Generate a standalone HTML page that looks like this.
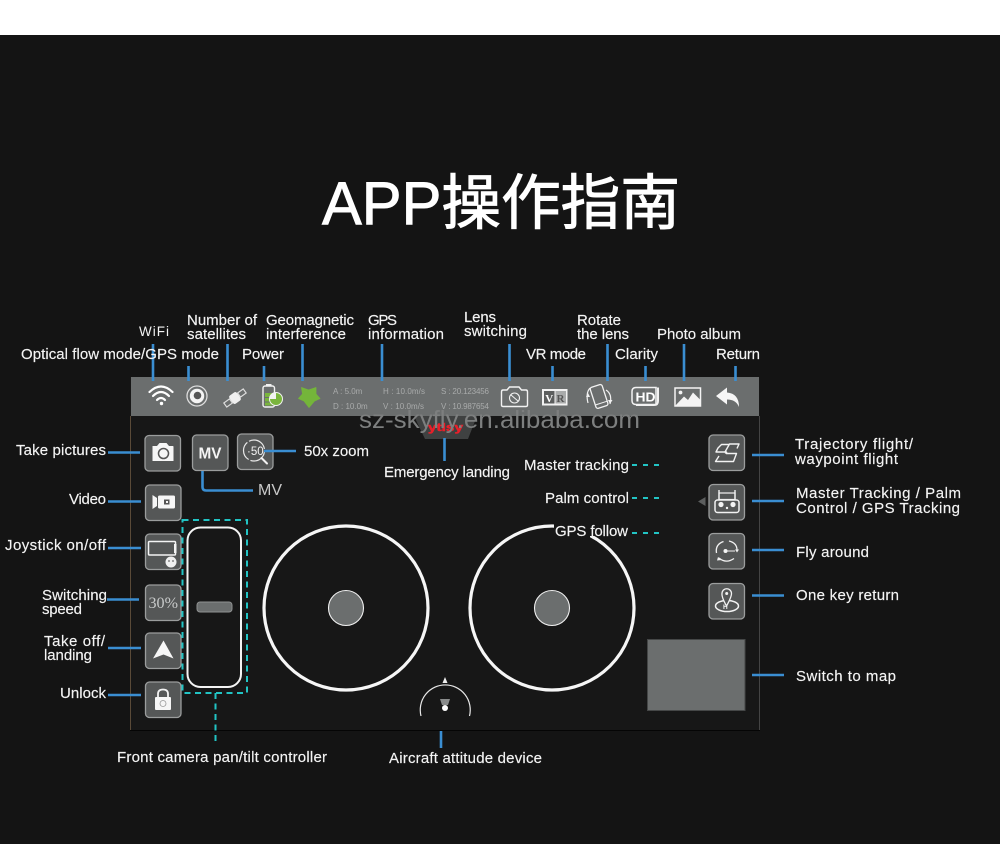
<!DOCTYPE html>
<html lang="zh">
<head>
<meta charset="utf-8">
<title>APP操作指南</title>
<style>
html,body{margin:0;padding:0;background:#141414;width:1000px;height:844px;overflow:hidden}
svg{display:block;filter:blur(.35px)}
text{font-family:"Liberation Sans","Noto Sans CJK SC",sans-serif}
.l text{fill:#f4f4f4;font-size:15px;stroke:#f4f4f4;stroke-width:.15}
.b{stroke:#3a8ed2;stroke-width:2.6;fill:none}
.d{stroke:#22c4c4;stroke-width:2;fill:none}
.btn{fill:#555757;stroke:#9b9d9d;stroke-width:1.3}
.s text{fill:#a9abab;font-size:8px}
</style>
</head>
<body>
<svg width="1000" height="844" viewBox="0 0 1000 844" xmlns="http://www.w3.org/2000/svg">
<rect width="1000" height="844" fill="#141414"/>
<rect width="1000" height="35" fill="#ffffff"/>

<text x="322" y="224" fill="#ffffff" stroke="#ffffff" stroke-width=".9" font-size="60" textLength="358" lengthAdjust="spacingAndGlyphs">APP操作指南</text>

<!-- panel -->
<rect x="130" y="377" width="629.500" height="353" fill="#171717"/>
<path d="M130.500 416V730" stroke="#5a4a38" stroke-width="1"/>
<path d="M759.500 416V730" stroke="#444" stroke-width="1"/>
<path d="M130 730.500H760" stroke="#050505" stroke-width="1"/>
<rect x="131" y="377" width="628" height="39" fill="#6b6e6e"/>

<!-- emergency trapezoid -->
<path d="M414 416H477L468 439H425Z" fill="#3f4141"/>

<!-- status bar icons -->
<g fill="none" stroke="#fff" stroke-width="2.200" stroke-linecap="round">
<path d="M149.500 392Q161 381 172.500 392"/>
<path d="M153 396Q161 388 169 396"/>
<path d="M157 400Q161 396 165 400"/>
</g>
<circle cx="161.500" cy="403.500" r="1.700" fill="#fff"/>
<circle cx="197" cy="396" r="10" fill="none" stroke="#ddd" stroke-width="1.300"/>
<circle cx="197" cy="396" r="7.200" fill="#f4f4f4"/>
<circle cx="197.500" cy="395.500" r="3.800" fill="#555"/>
<g transform="rotate(-36 235 398)">
<rect x="223" y="395.500" width="7" height="5" fill="none" stroke="#ddd" stroke-width="1.200"/>
<rect x="240" y="395.500" width="7" height="5" fill="none" stroke="#ddd" stroke-width="1.200"/>
<rect x="230.500" y="393" width="9" height="10" rx="2" fill="#f0f0f0"/>
</g>
<rect x="263" y="386" width="11.500" height="21" rx="2" fill="none" stroke="#f2f2f2" stroke-width="1.400"/>
<rect x="266" y="384" width="5.500" height="2" fill="#f2f2f2"/>
<rect x="265" y="393" width="8" height="4" fill="#7ab53d"/>
<rect x="265" y="398" width="8" height="3.500" fill="#7ab53d"/>
<rect x="265" y="402.500" width="8" height="3" fill="#7ab53d"/>
<circle cx="276" cy="399" r="6.500" fill="#7ab53d" stroke="#f2f2f2" stroke-width="1"/>
<path d="M276 399V392.500A6.500 6.500 0 0 0 269.500 399Z" fill="#f2f2f2"/>
<path d="M301.500 387.500L308.500 390L316 387.500L316 394L320 398.500L314.500 401L309 407.500L304 401L298.500 398.500L302.500 394Z" fill="#74b53a" stroke="#74b53a" stroke-width=".8" stroke-linejoin="round"/>

<g class="s">
<text x="333" y="394">A : 5.0m</text>
<text x="333" y="409">D : 10.0m</text>
<text x="383" y="394" textLength="42">H : 10.0m/s</text>
<text x="383" y="409" textLength="41">V : 10.0m/s</text>
<text x="441" y="394" textLength="48">S : 20.123456</text>
<text x="441" y="409" textLength="48">V : 10.987654</text>
</g>

<!-- lens -->
<path d="M503 390H507L509.500 387H519L521.500 390H526Q527.500 390 527.500 392V405Q527.500 406.500 526 406.500H503Q501.500 406.500 501.500 405V392Q501.500 390 503 390Z" fill="none" stroke="#f2f2f2" stroke-width="1.400"/>
<circle cx="514.500" cy="398" r="5" fill="none" stroke="#f2f2f2" stroke-width="1.100"/>
<path d="M511 395L518 401" stroke="#f2f2f2" stroke-width="1"/>
<!-- VR -->
<rect x="542" y="389" width="25.500" height="16.500" fill="#f2f2f2"/>
<rect x="544" y="391" width="10.500" height="12.500" fill="#5c5e5e"/>
<rect x="555.500" y="391" width="10.500" height="12.500" fill="#a9abab"/>
<text x="545.300" y="402" font-size="11" fill="#fff" style="font-family:'Liberation Serif',serif;font-weight:700">V</text>
<text x="556.500" y="402" font-size="11" fill="#555" style="font-family:'Liberation Serif',serif;font-weight:700">R</text>
<!-- rotate -->
<g transform="rotate(-18 599 397)">
<rect x="593" y="385.500" width="12.500" height="22" rx="2" fill="none" stroke="#f2f2f2" stroke-width="1.300"/>
<path d="M593 403.500H605.500" stroke="#f2f2f2" stroke-width="1"/>
</g>
<path d="M590 388Q585.500 393 588 403" fill="none" stroke="#f2f2f2" stroke-width="1.200"/>
<path d="M606 390Q612.500 394 610 404" fill="none" stroke="#f2f2f2" stroke-width="1.200"/>
<path d="M586 397L590 397L588 393Z M608 400L612.500 400L610 404Z" fill="#f2f2f2"/>
<!-- HD -->
<path d="M636 387.500H656V404.500H636Q632 404.500 632 400.500V391.500Q632 387.500 636 387.500Z" fill="none" stroke="#f2f2f2" stroke-width="1.500"/>
<path d="M656 387.500H659V401Q659 406 654 406H636V404.500H654Q657 404.500 657 401V388Z" fill="#f2f2f2"/>
<text x="635.500" y="401.500" font-size="13" fill="#fff" style="font-weight:700" textLength="20" lengthAdjust="spacingAndGlyphs">HD</text>
<!-- album -->
<rect x="675" y="388" width="25.500" height="18" fill="none" stroke="#f4f4f4" stroke-width="1.500"/>
<circle cx="680.500" cy="392.500" r="1.900" fill="#f4f4f4"/>
<path d="M675 406L684 396.500L688 400L693 392.500L701 400.500V406.500H675Z" fill="#f4f4f4"/>
<!-- return -->
<path d="M716 396L727 387.500V392.500Q739 393.500 739 407Q736 399.500 727 399.500V404.500Z" fill="#f6f6f6"/>

<!-- blue top lines -->
<g class="b">
<path d="M153 344V381M188.500 366V381M227.500 344V381M264 366V381M302.500 344V381M382 344V381M509.500 344V381M552.500 366V381M607.500 344V381M645.500 366V381M684 344V381M735.500 366V381"/>
</g>

<!-- red logo under watermark -->
<text x="428" y="431" font-size="11" fill="#e8202a" stroke="#e8202a" stroke-width=".5" style="font-weight:700" textLength="35" lengthAdjust="spacingAndGlyphs">ytlsy</text>
<!-- watermark -->
<text x="359" y="428" font-size="25" fill="#7d7f7f" textLength="281" lengthAdjust="spacingAndGlyphs">sz-skyfly.en.alibaba.com</text>

<!-- buttons -->
<g class="btn">
<rect x="145" y="435.500" width="35.500" height="35.500" rx="4"/>
<rect x="192.500" y="435" width="35.500" height="35.500" rx="4"/>
<rect x="237.500" y="434" width="35.500" height="35.500" rx="4"/>
<rect x="145.500" y="485" width="35.500" height="35.500" rx="4"/>
<rect x="145.500" y="534" width="35.500" height="35.500" rx="4"/>
<rect x="145.500" y="585" width="35.500" height="35.500" rx="4"/>
<rect x="145.500" y="633" width="35.500" height="35.500" rx="4"/>
<rect x="145.500" y="682" width="35.500" height="35.500" rx="4"/>
<rect x="709" y="435" width="35.500" height="35.500" rx="4"/>
<rect x="709" y="484.500" width="35.500" height="35.500" rx="4"/>
<rect x="709" y="533.500" width="35.500" height="35.500" rx="4"/>
<rect x="709" y="583.500" width="35.500" height="35.500" rx="4"/>
</g>

<!-- camera -->
<path d="M152.500 446H157L159.500 443H166.500L169 446H173Q173.500 446 173.500 447V461H152.500Z" fill="#f6f6f6"/>
<circle cx="163.500" cy="453.500" r="5" fill="#f6f6f6" stroke="#555" stroke-width="1.500"/>
<circle cx="163.500" cy="453.500" r="2.500" fill="#f6f6f6"/>
<!-- MV -->
<text x="198.500" y="458.500" font-size="15.500" fill="#f4f4f4" style="font-weight:700" textLength="23" lengthAdjust="spacingAndGlyphs">MV</text>
<!-- zoom -->
<circle cx="254" cy="450.500" r="10.500" fill="none" stroke="#e8e8e8" stroke-width="1.200" stroke-dasharray="20 2"/>
<path d="M261.500 458L267 463.500" stroke="#f2f2f2" stroke-width="2" stroke-linecap="round"/>
<text x="247" y="455" font-size="11.500" fill="#f2f2f2">·50</text>
<!-- video -->
<path d="M152.500 495L157 498V506L152.500 509Z" fill="#f6f6f6"/>
<rect x="158" y="495.500" width="17" height="13" rx="1.500" fill="#f6f6f6"/>
<rect x="164" y="499.500" width="5.500" height="5" fill="#555"/>
<rect x="166" y="501" width="2" height="2" fill="#f6f6f6"/>
<!-- joystick -->
<rect x="148.500" y="541.500" width="27" height="13.500" rx="1" fill="none" stroke="#f4f4f4" stroke-width="1.500"/>
<rect x="174" y="544" width="2.500" height="9" fill="#f4f4f4"/>
<circle cx="171" cy="562" r="5.500" fill="#f0f0f0"/>
<circle cx="169" cy="561" r="1" fill="#888"/>
<circle cx="173" cy="561" r="1" fill="#888"/>
<!-- 30% -->
<text x="148.500" y="608" font-size="15.500" fill="#c8caca" style="font-family:'Liberation Serif',serif" textLength="29.500" lengthAdjust="spacingAndGlyphs">30%</text>
<!-- takeoff -->
<path d="M163.500 640.500L173.500 658.500L163.500 654.500L153 658.500Z" fill="#f6f6f6"/>
<!-- lock -->
<path d="M158 697V694Q158 689.500 163 689.500Q168 689.500 168 694V697" fill="none" stroke="#f2f2f2" stroke-width="1.800"/>
<rect x="155" y="697" width="16" height="13" rx="1" fill="#f6f6f6"/>
<circle cx="163" cy="703.500" r="3" fill="none" stroke="#999" stroke-width=".8"/>

<!-- right icons -->
<g fill="none" stroke="#f2f2f2" stroke-width="1.400" stroke-linejoin="round">
<path d="M725 452L729.500 444H739L737 448.500"/>
<path d="M726 452H716L718 448L721.500 444.500H729.500"/>
<path d="M726 453.500H736.500L733.500 461.500H715.500L719 456"/>
</g>
<circle cx="726" cy="452.500" r="1.300" fill="#f2f2f2"/>
<!-- remote -->
<path d="M719 490V500M735 490V500" stroke="#f2f2f2" stroke-width="1.400"/>
<rect x="719" y="493" width="16" height="6.500" fill="none" stroke="#f2f2f2" stroke-width="1.200"/>
<rect x="715" y="500" width="24" height="12.500" rx="2.500" fill="none" stroke="#f2f2f2" stroke-width="1.500"/>
<circle cx="721" cy="504.500" r="2.600" fill="#f2f2f2"/>
<circle cx="733" cy="504.500" r="2.600" fill="#f2f2f2"/>
<circle cx="727" cy="508" r="1.200" fill="#f2f2f2"/>
<path d="M698 501.500L705.500 497V506Z" fill="#5c5e5e"/>
<!-- fly around -->
<g fill="none" stroke="#f2f2f2" stroke-width="1.300">
<path d="M716.500 553Q715 544.500 723.500 541.500"/>
<path d="M729 541Q737 543 737 550"/>
<path d="M719 558Q726 564 734 558.500"/>
<path d="M725.500 551H735" stroke-width="1"/>
</g>
<circle cx="725.500" cy="551" r="2" fill="#f6f6f6"/>
<path d="M735 549.500L739 549.500L737 552.500Z M718 557L722 560L717 560.500Z" fill="#f2f2f2"/>
<!-- return home -->
<ellipse cx="727" cy="606" rx="11.500" ry="5.500" fill="none" stroke="#f2f2f2" stroke-width="1.500"/>
<path d="M726.500 606Q721.500 597 722 593.500A4.700 4.700 0 0 1 731.500 593.500Q731.500 597 726.500 606Z" fill="#555757" stroke="#f2f2f2" stroke-width="1.300"/>
<circle cx="726.700" cy="593.500" r="1.500" fill="#f2f2f2"/>
<text x="723" y="609" font-size="6.500" fill="#f2f2f2" style="font-weight:700">H</text>

<!-- map -->
<rect x="647.500" y="639.500" width="97.500" height="71" fill="#6b6e6e" stroke="#454747" stroke-width="1"/>

<!-- slider -->
<rect x="182.500" y="520" width="64.500" height="173" class="d" stroke-dasharray="6 4.500"/>
<rect x="187.500" y="527.500" width="53.500" height="159.500" rx="13" fill="none" stroke="#f4f4f4" stroke-width="2"/>
<rect x="197" y="602" width="35" height="10" rx="3" fill="#6b6e6e" stroke="#8f9191" stroke-width="1"/>
<path d="M215.500 693V741" class="d" stroke-dasharray="6 4.500"/>

<!-- joysticks -->
<circle cx="346" cy="608" r="82" fill="none" stroke="#f6f6f6" stroke-width="3.200"/>
<circle cx="346" cy="608" r="17.500" fill="#6b6e6e" stroke="#f0f0f0" stroke-width="1.100"/>
<circle cx="552" cy="608" r="82" fill="none" stroke="#f6f6f6" stroke-width="3.200"/>
<circle cx="552" cy="608" r="17.500" fill="#6b6e6e" stroke="#f0f0f0" stroke-width="1.100"/>
<rect x="554" y="522" width="36" height="16" fill="#171717"/>
<rect x="590" y="522" width="40" height="14" fill="#171717"/>

<!-- attitude -->
<path d="M421 716A25 25 0 1 1 469.500 716" fill="none" stroke="#e8e8e8" stroke-width="1.200"/>
<path d="M445 677L447.500 683H442.500Z" fill="#f0f0f0"/>
<path d="M440 699H450L448 705H442Z" fill="#8a8c8c"/>
<circle cx="445" cy="708" r="3" fill="#fff"/>

<!-- blue lines left/right -->
<g class="b">
<path d="M108 452.500H140M108 501.500H141M108 548H141M107 599.500H139M108 648H141M108 695H141"/>
<path d="M264 451H296"/>
<path d="M202.500 471V487Q202.500 490.500 206 490.500H253"/>
<path d="M444.500 438V461"/>
<path d="M441 731V748"/>
<path d="M752 455H784M752 501H784M752 550H784M752 595.500H784M752 675H784"/>
</g>
<!-- teal dashes -->
<g class="d">
<path d="M632 465H660M632 498H660M632 533H660" stroke-dasharray="5 6"/>
</g>

<!-- labels -->
<g class="l">
<text x="139" y="336" textLength="30" lengthAdjust="spacing" style="font-family:'Liberation Sans',sans-serif;font-size:13.500px;stroke:none">WiFi</text>
<text x="21" y="359" textLength="198">Optical flow mode/GPS mode</text>
<text x="187" y="325" textLength="70">Number of</text>
<text x="187" y="339" textLength="59">satellites</text>
<text x="242" y="359" textLength="42">Power</text>
<text x="266" y="325" textLength="88">Geomagnetic</text>
<text x="266" y="339" textLength="80">interference</text>
<text x="368" y="325" textLength="29">GPS</text>
<text x="368" y="339" textLength="76">information</text>
<text x="464" y="322" textLength="32">Lens</text>
<text x="464" y="336" textLength="63">switching</text>
<text x="526" y="359" textLength="60">VR mode</text>
<text x="577" y="325" textLength="44">Rotate</text>
<text x="577" y="339" textLength="52">the lens</text>
<text x="615" y="359" textLength="43">Clarity</text>
<text x="657" y="339" textLength="84">Photo album</text>
<text x="716" y="359" textLength="44">Return</text>

<text x="16" y="455" textLength="90">Take pictures</text>
<text x="69" y="504" textLength="37">Video</text>
<text x="5" y="550" textLength="101">Joystick on/off</text>
<text x="42" y="600" textLength="65">Switching</text>
<text x="42" y="614" textLength="40">speed</text>
<text x="44" y="646" textLength="61">Take off/</text>
<text x="44" y="660" textLength="48">landing</text>
<text x="60" y="698" textLength="46">Unlock</text>

<text x="304" y="456" textLength="65">50x zoom</text>
<text x="258" y="495" textLength="24" style="fill:#c9c9c9;stroke:none;font-size:16px">MV</text>
<text x="384" y="477" textLength="126">Emergency landing</text>
<text x="524" y="470" textLength="105">Master tracking</text>
<text x="545" y="503" textLength="84">Palm control</text>
<text x="555" y="536" textLength="73">GPS follow</text>

<text x="795" y="449" textLength="118">Trajectory flight/</text>
<text x="795" y="464" textLength="103">waypoint flight</text>
<text x="796" y="498" textLength="165">Master Tracking / Palm</text>
<text x="796" y="513" textLength="164">Control / GPS Tracking</text>
<text x="796" y="557" textLength="73">Fly around</text>
<text x="796" y="600" textLength="103">One key return</text>
<text x="796" y="681" textLength="100">Switch to map</text>

<text x="117" y="762" textLength="210">Front camera pan/tilt controller</text>
<text x="389" y="763" textLength="153">Aircraft attitude device</text>
</g>
</svg>
</body>
</html>
